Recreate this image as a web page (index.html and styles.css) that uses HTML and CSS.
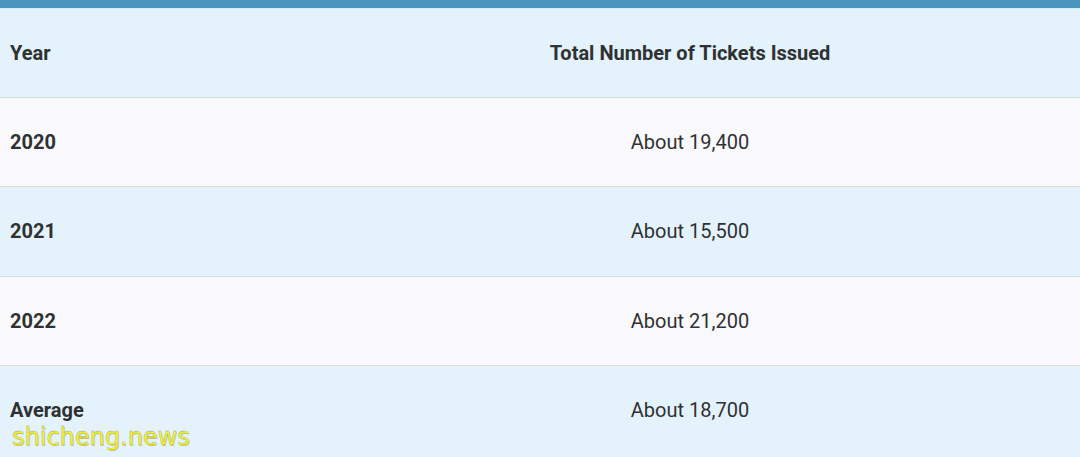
FILE: index.html
```html
<!DOCTYPE html>
<html>
<head>
<meta charset="utf-8">
<link rel="stylesheet" href="styles.css">
</head>
<body>
<div class="page">
  <div class="topbar"></div>
  <table class="tickets">
    <thead>
      <tr class="head">
        <th class="c-year">Year</th>
        <th class="c-total">Total Number of Tickets Issued</th>
      </tr>
    </thead>
    <tbody>
      <tr class="odd"><td class="c-year">2020</td><td class="c-total">About 19,400</td></tr>
      <tr class="even"><td class="c-year">2021</td><td class="c-total">About 15,500</td></tr>
      <tr class="odd"><td class="c-year">2022</td><td class="c-total">About 21,200</td></tr>
      <tr class="even last"><td class="c-year">Average</td><td class="c-total">About 18,700</td></tr>
    </tbody>
  </table>
  <div class="watermark">shicheng.news</div>
</div>
</body>
</html>
```
FILE: styles.css
```css
html, body {
  margin: 0;
  padding: 0;
  background: #e4f2fb;
  overflow: hidden;
}
.page {
  position: relative;
  width: 1080px;
  height: 457px;
  font-family: Roboto, "Liberation Sans", sans-serif;
  color: #2f3133;
}
.topbar {
  height: 8px;
  background: #4a95bd;
  border-bottom: 1px solid #cdeefa;
}
.tickets {
  width: 1080px;
  border-collapse: collapse;
  table-layout: fixed;
}
.tickets th, .tickets td {
  font-size: 20px;
  padding: 0 10px;
  vertical-align: middle;
}
.tickets th {
  font-weight: 700;
}
.c-year {
  width: 280px;
  text-align: left;
  font-weight: 700;
}
.c-total {
  text-align: center;
  font-weight: 400;
}
.tickets th.c-total {
  font-weight: 700;
}
.head {
  height: 88px;
  background: #e3f2fb;
  border-bottom: 1px solid #d6d8da;
}
.odd td, .even td {
  height: 88.5px;
}
.odd {
  background: #f9f8fa;
  border-bottom: 1px solid #dcdcdc;
}
.even {
  background: #e4f2fb;
  border-bottom: 1px solid #dcdcdc;
}
.even.last {
  border-bottom: none;
}
.watermark {
  position: absolute;
  left: 12px;
  top: 423px;
  font-family: "DejaVu Sans", sans-serif;
  font-size: 24px;
  font-weight: 400;
  color: #f3f33a;
  -webkit-text-stroke: 0.3px #a8a830;
  text-shadow: 1px 1px 0 rgba(120, 120, 40, 0.35);
  letter-spacing: 0;
}
```
